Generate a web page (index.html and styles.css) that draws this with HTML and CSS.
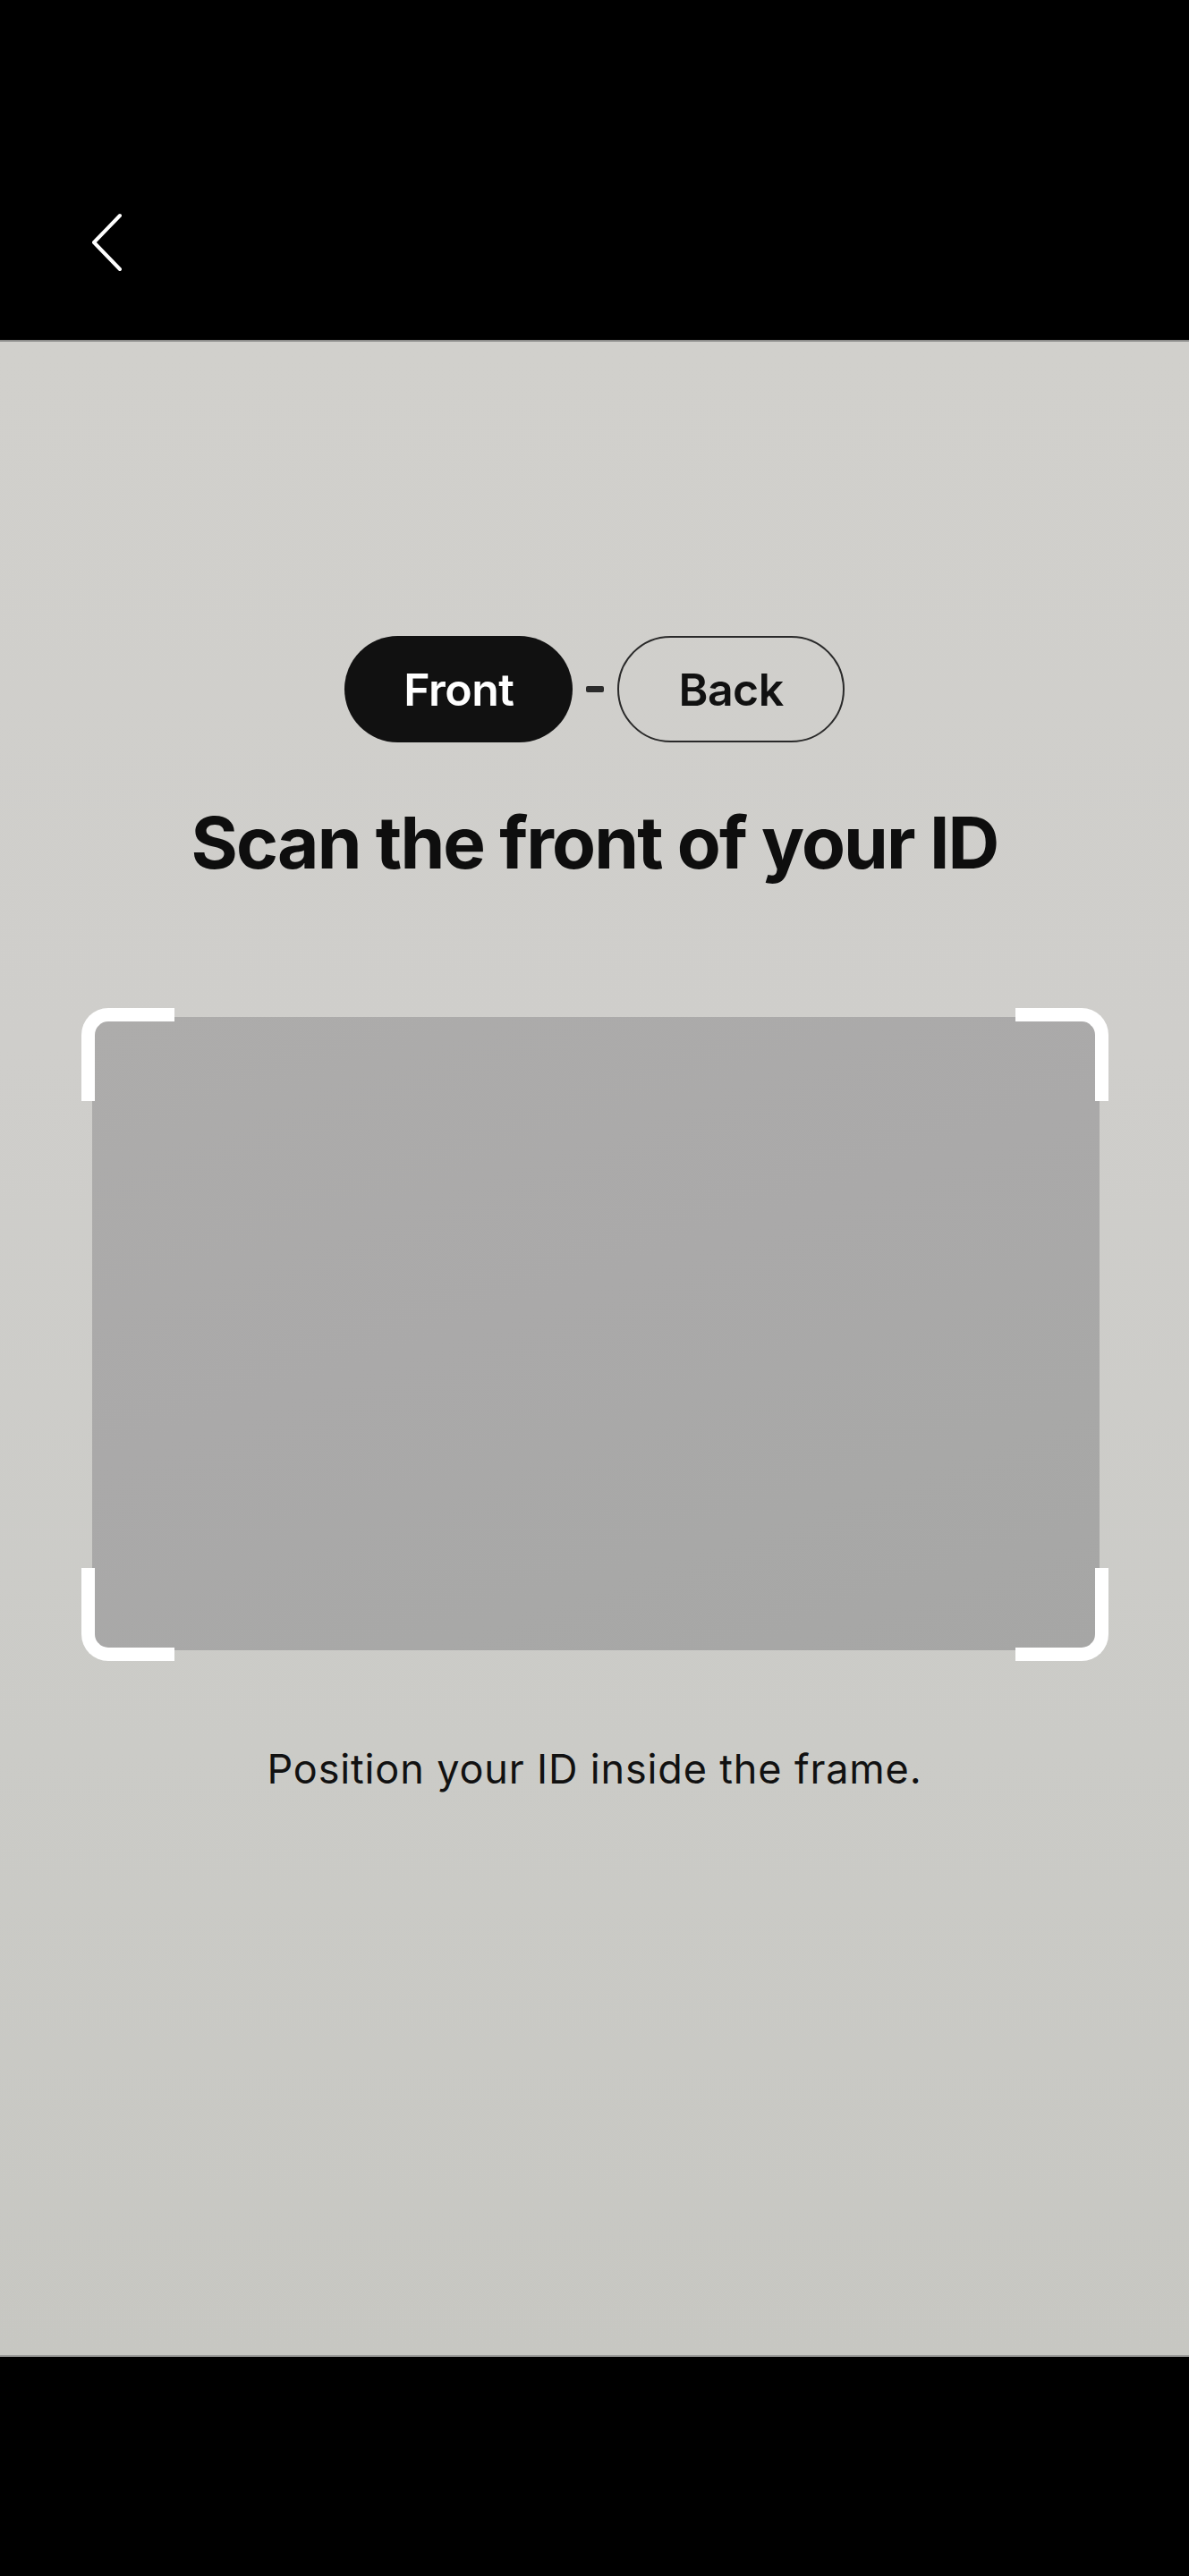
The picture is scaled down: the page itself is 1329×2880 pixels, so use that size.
FILE: index.html
```html
<!DOCTYPE html>
<html lang="en">
<head>
<meta charset="utf-8">
<title>Scan ID</title>
<link rel="stylesheet" href="styles.css">
</head>
<body>
<div class="screen">
  <header class="topbar">
    <button class="back" aria-label="Back">
      <svg width="40" height="72" viewBox="0 0 40 72" aria-hidden="true">
        <path d="M33 5 L4 35 L33 65" fill="none" stroke="#fff" stroke-width="4" stroke-linecap="round" stroke-linejoin="round"/>
      </svg>
    </button>
  </header>
  <main class="camera">
    <div class="tabs">
      <span class="pill pill-active">Front</span>
      <span class="dash"></span>
      <span class="pill pill-outline">Back</span>
    </div>
    <h1 class="title">Scan the front of your ID</h1>
    <div class="frame">
      <div class="card"></div>
      <span class="corner tl"></span>
      <span class="corner tr"></span>
      <span class="corner bl"></span>
      <span class="corner br"></span>
    </div>
    <p class="hint">Position your ID inside the frame.</p>
  </main>
  <footer class="bottombar"></footer>
</div>
</body>
</html>
```
FILE: styles.css
```css
* { box-sizing: border-box; }
html, body { margin: 0; padding: 0; background: #000; }
body { font-family: Inter, "Noto Sans", "Liberation Sans", sans-serif; }

.screen {
  width: 1329px;
  height: 2880px;
  display: grid;
  grid-template-rows: 380px 1fr 245px;
}

.topbar {
  background: #000;
  padding: 236px 0 0 101px;
}
.back {
  background: none;
  border: 0;
  padding: 0;
  width: 40px;
  height: 72px;
  display: block;
  cursor: pointer;
}
.back svg { display: block; }

.camera {
  background: linear-gradient(180deg, #d1d0cc 0%, #cfcecb 35%, #cbcbc7 70%, #c7c7c2 100%);
  border-top: 2px solid #8d8d8b;
  border-bottom: 2px solid #9a9a98;
  display: flex;
  flex-direction: column;
  align-items: center;
  padding-top: 329px;
}

.tabs {
  display: flex;
  align-items: center;
  gap: 15px;
}
.pill {
  height: 119px;
  border-radius: 60px;
  padding: 0 66px;
  display: flex;
  align-items: center;
  font-size: 50px;
  font-weight: 600;
  letter-spacing: -0.5px;
}
.pill-active {
  background: #111;
  color: #fff;
}
.pill-outline {
  border: 2px solid #2a2a2a;
  color: #111;
}
.dash {
  width: 20px;
  height: 7px;
  border-radius: 2px;
  background: #2b2b2b;
}

.title {
  margin: 64px 0 0;
  font-size: 80px;
  line-height: 96px;
  font-weight: 700;
  color: #0e0e0e;
  letter-spacing: -1.85px;
}

.frame {
  position: relative;
  margin-top: 137px;
  width: 1148px;
  height: 730px;
  padding: 10px 10px 12px 12px;
}
.card {
  width: 100%;
  height: 100%;
  background: linear-gradient(160deg, #adacab 0%, #aaa9a9 45%, #a8a8a7 75%, #a6a6a5 100%);
}
.corner {
  position: absolute;
  width: 104px;
  height: 104px;
  border: 0 solid #fff;
}
.corner.tl { left: 0; top: 0; border-top-width: 15px; border-left-width: 15px; border-top-left-radius: 30px; }
.corner.tr { right: 0; top: 0; border-top-width: 15px; border-right-width: 15px; border-top-right-radius: 30px; }
.corner.bl { left: 0; bottom: 0; border-bottom-width: 15px; border-left-width: 15px; border-bottom-left-radius: 30px; }
.corner.br { right: 0; bottom: 0; border-bottom-width: 15px; border-right-width: 15px; border-bottom-right-radius: 30px; }

.hint {
  margin: 94px 0 0;
  font-size: 45px;
  line-height: 54px;
  font-weight: 400;
  color: #111;
  letter-spacing: 0.85px;
}

.bottombar { background: #000; }
```
